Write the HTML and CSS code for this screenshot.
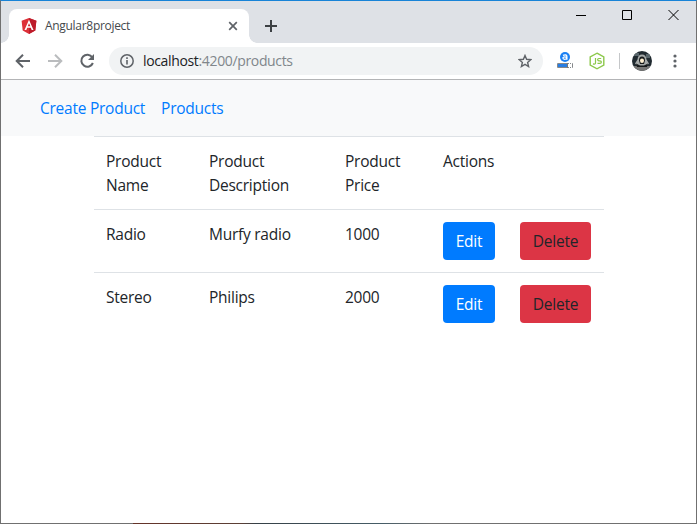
FILE: index.html
```html
<!DOCTYPE html>
<html lang="en">
<head>
<meta charset="utf-8">
<title>Angular8project</title>
<link rel="stylesheet" href="styles.css">
</head>
<body>
<div class="window">
  <header class="tabstrip">
    <div class="tab">
      <svg class="favicon" width="16" height="16" viewBox="0 0 16 16"><path fill="#dd3038" d="M8 0 15.4 2.7 14.3 12.5 8 16 1.7 12.5.6 2.7z"/><path fill="#bd1c2b" d="M8 0v16l6.3-3.5 1.1-9.8z"/><path fill="#fff" fill-rule="evenodd" d="M8 1.8 3.5 12h1.8l.9-2.3h3.6l.9 2.3h1.8zM8 5.2l1.3 3.1H6.7z"/></svg>
      <span class="tab-title">Angular8project</span>
      <svg class="tab-close" width="10" height="10" viewBox="0 0 10 10"><path d="M1.2 1.2 8.8 8.8M8.8 1.2 1.2 8.8" stroke="#5f6368" stroke-width="1.7"/></svg>
    </div>
    <svg class="new-tab" width="14" height="14" viewBox="0 0 14 14"><path d="M7 1v12M1 7h12" stroke="#3c4043" stroke-width="2"/></svg>
    <div class="controls">
      <svg width="10" height="11" viewBox="0 0 10 11"><path d="M0 6.5h10" stroke="#000"/></svg>
      <svg width="10" height="11" viewBox="0 0 10 11"><path d="M.5 1.500h9v9h-9z" fill="none" stroke="#000"/></svg>
      <svg width="11" height="11" viewBox="0 0 11 11"><path d="M.5 1l10 10M10.500 1l-10 10" stroke="#000"/></svg>
    </div>
  </header>
  <div class="toolbar">
    <svg class="back" width="16" height="16" viewBox="0 0 16 16"><path d="M15 8H2M8 1.700 1.700 8 8 14.300" fill="none" stroke="#5f6368" stroke-width="2"/></svg>
    <svg class="forward" width="16" height="16" viewBox="0 0 16 16"><path d="M1 8h13M8 1.700 14.300 8 8 14.300" fill="none" stroke="#babcbe" stroke-width="2"/></svg>
    <svg class="reload" width="16" height="16" viewBox="0 0 16 16"><path d="M13.300 4.300A6 6 0 1 0 13.900 10" fill="none" stroke="#5f6368" stroke-width="2"/><path d="M15 1v6H9z" fill="#5f6368"/></svg>
    <div class="address">
      <svg width="14" height="14" viewBox="0 0 14 14"><circle cx="7" cy="7" r="6.200" fill="none" stroke="#5f6368" stroke-width="1.500"/><path d="M7 6v4.500M7 3.300v1.700" stroke="#5f6368" stroke-width="1.600"/></svg>
      <span class="url">localhost<span class="path">:4200/products</span></span>
      <svg class="star" width="14" height="14" viewBox="0 0 14 14"><path d="M7 1.500 8.600 5.300 12.800 5.700 9.600 8.400 10.600 12.500 7 10.300 3.400 12.500 4.400 8.400 1.200 5.700 5.400 5.300z" fill="none" stroke="#5f6368" stroke-width="1.400"/></svg>
    </div>
    <svg class="ext" width="16" height="17" viewBox="0 0 16 17"><circle cx="8" cy="5" r="5" fill="#1a80f4"/><path d="M6 3.300q3.800-1.200 3.800 1v3.400" fill="none" stroke="#fff" stroke-width="1.400"/><ellipse cx="7.800" cy="6.100" rx="1.900" ry="1.200" fill="none" stroke="#fff" stroke-width="1.200"/><path d="M.5 11.500h15v4H.5z" fill="#fff" stroke="#85888b"/><path d="M1 12h10v3H1z" fill="#287de2"/><path d="M10.500 11v5" stroke="#777"/><path d="M12 11.500h3M12 15.500h3" stroke="#fff" stroke-dasharray="1 1"/></svg>
    <svg class="node" width="16" height="18" viewBox="0 0 16 18"><path d="M8 1.200 14.800 5v8L8 16.800 1.200 13V5z" fill="none" stroke="#8cc84b" stroke-width="1.400"/><path d="M6.500 6v5q0 1.500-2.500.9M12.200 6.500H9.900Q8.600 6.500 8.600 7.500T9.900 8.800h1q1.500 0 1.500 1.300t-1.500 1.300H8.500" fill="none" stroke="#8cc84b" stroke-width="1.200"/></svg>
    <span class="divider"></span>
    <svg class="avatar" width="20" height="20" viewBox="0 0 20 20"><defs><clipPath id="round"><circle cx="10" cy="10" r="10"/></clipPath></defs><g clip-path="url(#round)"><path fill="#202a30" d="M0 0h20v20H0z"/><path fill="#59666b" d="M2 2h5v3H2zM14 3h4v4h-4z"/><path fill="#767675" d="M0 15h20v5H0z"/><path fill="#a5a9a8" d="M10 3.500q4 0 4.500 5l2.500 4-3 2.500H6L3 12.500l2.500-4q.5-5 4.500-5z"/><path fill="#171a1b" d="M10 5.500q3 0 3 4l-1 3.500H8L7 9.500q0-4 3-4zM4 12.500l4 2h4l4-2-1 3.500H5z"/><ellipse cx="10" cy="9.800" rx="2" ry="2.300" fill="#fff0d1"/></g></svg>
    <svg class="menu" width="4" height="14" viewBox="0 0 4 14"><g fill="#5f6368"><circle cx="2" cy="2" r="1.600"/><circle cx="2" cy="7" r="1.600"/><circle cx="2" cy="12" r="1.600"/></g></svg>
  </div>
  <nav class="navbar"><a>Create Product</a><a>Products</a></nav>
  <main>
    <table>
      <colgroup><col class="c-name"><col class="c-desc"><col class="c-price"><col class="c-edit"><col class="c-delete"></colgroup>
      <thead><tr><td>Product<br>Name</td><td>Product<br>Description</td><td>Product<br>Price</td><td colspan="2">Actions</td></tr></thead>
      <tbody>
        <tr><td>Radio</td><td>Murfy radio</td><td>1000</td><td><a class="btn edit">Edit</a></td><td><a class="btn delete">Delete</a></td></tr>
        <tr><td>Stereo</td><td>Philips</td><td>2000</td><td><a class="btn edit">Edit</a></td><td><a class="btn delete">Delete</a></td></tr>
      </tbody>
    </table>
  </main>
  <footer class="frame-bottom"></footer>
</div>
</body>
</html>
```
FILE: styles.css
```css
* { box-sizing: border-box; }
body { margin: 0; background: #fff; color: #212529; font: 15.5px/24px "Open Sans", "Noto Sans", sans-serif; letter-spacing: -.25px; }
svg { display: block; flex: none; }
.window { width: 697px; height: 524px; display: flex; flex-direction: column; border-top: 1px solid #1883d7; border-left: 1px solid #707070; border-right: 1px solid #707070; overflow: hidden; }
.tabstrip { height: 42px; flex: none; display: flex; background: #dee1e6; padding: 8px 17px 0 0; }
.tab { position: relative; width: 240px; height: 34px; margin-left: 8px; padding: 0 11px 0 12px; border-radius: 8px 8px 0 0; background: #fff; display: flex; align-items: center; }
.tab::before, .tab::after { content: ""; position: absolute; bottom: 0; width: 8px; height: 8px; }
.tab::before { left: -8px; background: radial-gradient(circle at 0 0, #dee1e6 7.5px, #fff 8px); }
.tab::after { right: -8px; background: radial-gradient(circle at 100% 0, #dee1e6 7.5px, #fff 8px); }
.tab-title { margin-left: 8px; font-size: 12px; line-height: 16px; letter-spacing: -.3px; color: #45494d; }
.tab-close { margin-left: auto; }
.new-tab { margin: 10px 0 0 15px; }
.controls { margin-left: auto; display: flex; gap: 36px; }
.toolbar { height: 37px; flex: none; display: flex; align-items: center; padding: 0 15px 1px 14px; border-bottom: 1px solid #b3b4b6; }
.forward { margin-left: 16px; }
.reload { margin-left: 16px; }
.address { width: 434px; height: 28px; margin-left: 14px; padding: 0 11px; border-radius: 14px; background: #f1f3f4; display: flex; align-items: center; }
.url { margin-left: 9px; font-size: 14px; line-height: 20px; letter-spacing: -.35px; color: #202124; }
.path { color: #80868b; }
.star { margin-left: auto; }
.ext { margin-left: 14px; }
.node { margin-left: 16px; }
.divider { width: 1px; height: 16px; margin-left: 14px; background: #c5c7c9; }
.avatar { margin-left: 12px; }
.menu { margin-left: auto; margin-right: 4px; }
.navbar { height: 56px; flex: none; display: flex; align-items: center; gap: 16px; padding-left: 39px; background: #f8f9fa; color: #007bff; }
main { flex: 1; padding-left: 93px; }
table { width: 510px; table-layout: fixed; border-spacing: 0; }
.c-name { width: 103px; }
.c-desc { width: 136px; }
.c-price { width: 98px; }
.c-edit { width: 77px; }
.c-delete { width: 96px; }
td { padding: 12px; vertical-align: top; border-top: 1px solid #dee2e6; white-space: nowrap; }
.btn { display: flex; align-items: center; justify-content: center; height: 38px; border-radius: 4px; }
.edit { width: 52px; background: #007bff; color: #fff; }
.delete { width: 71px; background: #dc3545; }
.frame-bottom { height: 1px; flex: none; background: linear-gradient(90deg, #707070 132px, #653329 132px, #5b4036 240px, #354047 255px, #465d67 380px, #707070 431px); }
```
